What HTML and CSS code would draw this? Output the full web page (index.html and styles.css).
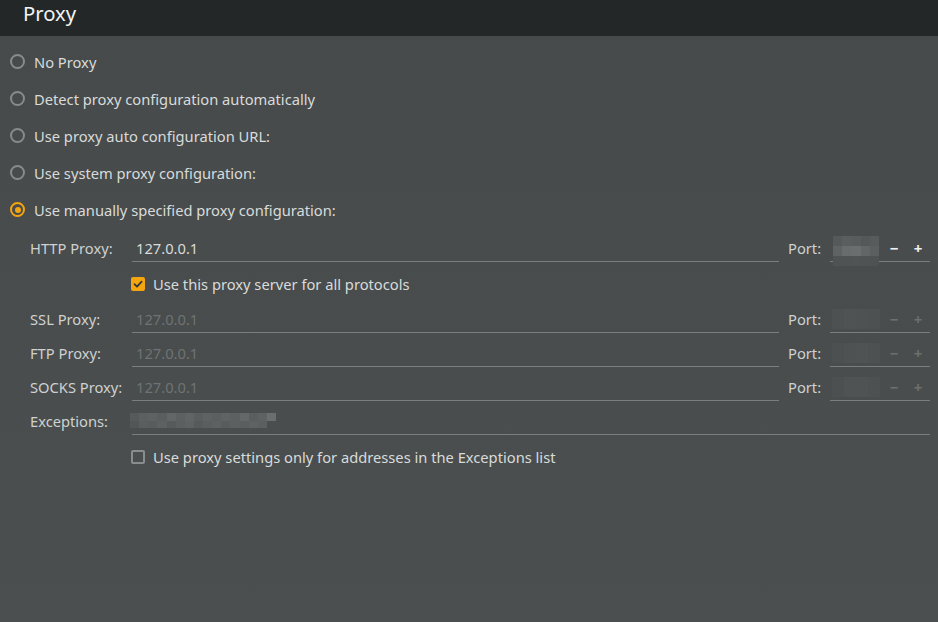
FILE: index.html
```html
<!DOCTYPE html>
<html>
<head>
<meta charset="utf-8">
<link rel="stylesheet" href="styles.css">
</head>
<body>
<div class="page">
  <div class="header">Proxy</div>
  <div class="content">
    <div class="radio-row"><span class="radio"></span><span>No Proxy</span></div>
    <div class="radio-row"><span class="radio"></span><span>Detect proxy configuration automatically</span></div>
    <div class="radio-row"><span class="radio"></span><span>Use proxy auto configuration URL:</span></div>
    <div class="radio-row"><span class="radio"></span><span>Use system proxy configuration:</span></div>
    <div class="radio-row"><span class="radio checked"></span><span>Use manually specified proxy configuration:</span></div>

    <div class="form">
      <div class="field-row first">
        <div class="label">HTTP Proxy:</div>
        <div class="input"><span class="value">127.0.0.1</span></div>
        <div class="port-label">Port:</div>
        <div class="spin">
          <div class="blur blur-http">
            <i style="background:#555959"></i><i style="background:#5a5e5e"></i><i style="background:#585c5c"></i><i style="background:#545858"></i><i style="background:#575b5b"></i>
            <i style="background:#5f6363"></i><i style="background:#686c6c"></i><i style="background:#6a6e6e"></i><i style="background:#626666"></i><i style="background:#5b5f5f"></i>
            <i style="background:#4f5353"></i><i style="background:#4f5353"></i><i style="background:#505454"></i><i style="background:#4f5353"></i><i style="background:#4e5252"></i>
          </div>
          <span class="btn">−</span><span class="btn">+</span>
        </div>
      </div>
      <div class="check-row top">
        <span class="checkbox checked"><svg width="14" height="14" viewBox="0 0 14 14"><path d="M3.5 7.2 L6 9.6 L10.6 4.6" fill="none" stroke="#31363b" stroke-width="1.8" stroke-linecap="round" stroke-linejoin="round"/></svg></span>
        <span>Use this proxy server for all protocols</span>
      </div>
      <div class="field-row">
        <div class="label">SSL Proxy:</div>
        <div class="input"><span class="value disabled">127.0.0.1</span></div>
        <div class="port-label">Port:</div>
        <div class="spin">
          <div class="blur blur-dim"><i style="background:#4d5151"></i><i style="background:#4f5353"></i><i style="background:#4e5252"></i><i style="background:#4d5151"></i></div>
          <span class="btn dim">−</span><span class="btn dim">+</span>
        </div>
      </div>
      <div class="field-row">
        <div class="label">FTP Proxy:</div>
        <div class="input"><span class="value disabled">127.0.0.1</span></div>
        <div class="port-label">Port:</div>
        <div class="spin">
          <div class="blur blur-dim"><i style="background:#4c5050"></i><i style="background:#4e5252"></i><i style="background:#4f5353"></i><i style="background:#4d5151"></i></div>
          <span class="btn dim">−</span><span class="btn dim">+</span>
        </div>
      </div>
      <div class="field-row">
        <div class="label">SOCKS Proxy:</div>
        <div class="input"><span class="value disabled">127.0.0.1</span></div>
        <div class="port-label">Port:</div>
        <div class="spin">
          <div class="blur blur-dim"><i style="background:#4c5050"></i><i style="background:#4f5353"></i><i style="background:#4f5353"></i><i style="background:#4d5151"></i></div>
          <span class="btn dim">−</span><span class="btn dim">+</span>
        </div>
      </div>
      <div class="field-row">
        <div class="label">Exceptions:</div>
        <div class="input wide">
          <div class="blur blur-exc">
            <i style="background:#565a5a"></i><i style="background:#5c6060"></i><i style="background:#5e6262"></i><i style="background:#5a5e5e"></i><i style="background:#626666"></i><i style="background:#5c6060"></i><i style="background:#606464"></i><i style="background:#5a5e5e"></i><i style="background:#5e6262"></i><i style="background:#5b5f5f"></i><i style="background:#5f6363"></i><i style="background:#5c6060"></i><i style="background:#646868"></i><i style="background:#5a5e5e"></i><i style="background:#5e6262"></i><i style="background:#6a6e6e"></i>
            <i style="background:#525656"></i><i style="background:#5a5e5e"></i><i style="background:#585c5c"></i><i style="background:#5d6161"></i><i style="background:#565a5a"></i><i style="background:#5b5f5f"></i><i style="background:#5e6262"></i><i style="background:#565a5a"></i><i style="background:#5a5e5e"></i><i style="background:#5d6161"></i><i style="background:#585c5c"></i><i style="background:#5c6060"></i><i style="background:#5a5e5e"></i><i style="background:#5e6262"></i><i style="background:#5b5f5f"></i><i style="background:#4a4e4e"></i>
          </div>
        </div>
      </div>
      <div class="check-row bottom">
        <span class="checkbox"></span>
        <span>Use proxy settings only for addresses in the Exceptions list</span>
      </div>
    </div>
  </div>
</div>
</body>
</html>
```

FILE: styles.css
```css
html, body {
  margin: 0;
  padding: 0;
}
body {
  width: 938px;
  height: 622px;
  overflow: hidden;
  background: #474b4b;
  font-family: "Noto Sans", "DejaVu Sans", sans-serif;
  font-size: 14.7px;
  color: #d9dbdb;
}
.page {
  height: 622px;
  background: linear-gradient(#464a4a, #4b4f4f);
}
.header {
  height: 36px;
  background: #232728;
  color: #f2f4f4;
  font-size: 20.3px;
  line-height: 26px;
  padding-left: 23px;
  box-sizing: border-box;
}
.content {
  padding: 7px 8px 0 10px;
}
.radio-row {
  height: 37px;
  display: flex;
  align-items: center;
  gap: 9px;
}
.radio {
  width: 15px;
  height: 15px;
  box-sizing: border-box;
  border: 2px solid #888b8b;
  border-radius: 50%;
  flex: none;
  position: relative;
}
.radio.checked {
  border-color: #f5a50f;
}
.radio.checked::after {
  content: "";
  position: absolute;
  left: 2.5px;
  top: 2.5px;
  width: 6px;
  height: 6px;
  border-radius: 50%;
  background: #f5a50f;
}
.form {
  padding-left: 20px;
  padding-top: 1px;
}
.field-row {
  height: 34px;
  display: flex;
  align-items: center;
}
.field-row.first {
  height: 38px;
}
.label {
  width: 102px;
  flex: none;
  color: #cfd1d1;
}
.input {
  flex: 1;
  height: 27px;
  border-bottom: 1px solid #7a7e7e;
  box-sizing: border-box;
  display: flex;
  align-items: center;
  padding-left: 4px;
}
.value.disabled {
  color: #6f7373;
}
.port-label {
  width: 42px;
  flex: none;
  padding-left: 9px;
  color: #cfd1d1;
}
.spin {
  width: 100px;
  flex: none;
  height: 27px;
  border-bottom: 1px solid #7a7e7e;
  box-sizing: border-box;
  display: flex;
  align-items: center;
}
.btn {
  width: 24px;
  text-align: center;
  font-weight: bold;
  color: #f0f2f2;
  font-size: 15px;
}
.btn.dim {
  color: #6b6f6f;
}
.blur {
  display: grid;
  flex: none;
}
.blur i {
  display: block;
}
.blur-http {
  width: 46px;
  height: 30px;
  margin-left: 3px;
  margin-right: 3px;
  grid-template-columns: repeat(5, 1fr);
  grid-template-rows: repeat(3, 1fr);
  position: relative;
  top: 3px;
}
.blur-dim {
  width: 48px;
  height: 20px;
  margin-left: 2px;
  margin-right: 2px;
  grid-template-columns: repeat(4, 1fr);
}
.input.wide {
  padding-left: 0;
}
.blur-exc {
  width: 146px;
  height: 15px;
  margin-left: -2px;
  grid-template-columns: repeat(16, 1fr);
  grid-template-rows: repeat(2, 1fr);
}
.check-row {
  height: 36px;
  display: flex;
  align-items: center;
  gap: 8px;
  padding-left: 101px;
  box-sizing: border-box;
}
.check-row.top {
  height: 35px;
  padding-bottom: 1px;
}
.check-row.bottom {
  height: 37px;
  padding-top: 1px;
}
.checkbox {
  width: 14px;
  height: 14px;
  box-sizing: border-box;
  border: 2px solid #8a8d8d;
  border-radius: 2px;
  flex: none;
  display: flex;
}
.checkbox.checked {
  border: none;
  background: #f5a50f;
}
```
